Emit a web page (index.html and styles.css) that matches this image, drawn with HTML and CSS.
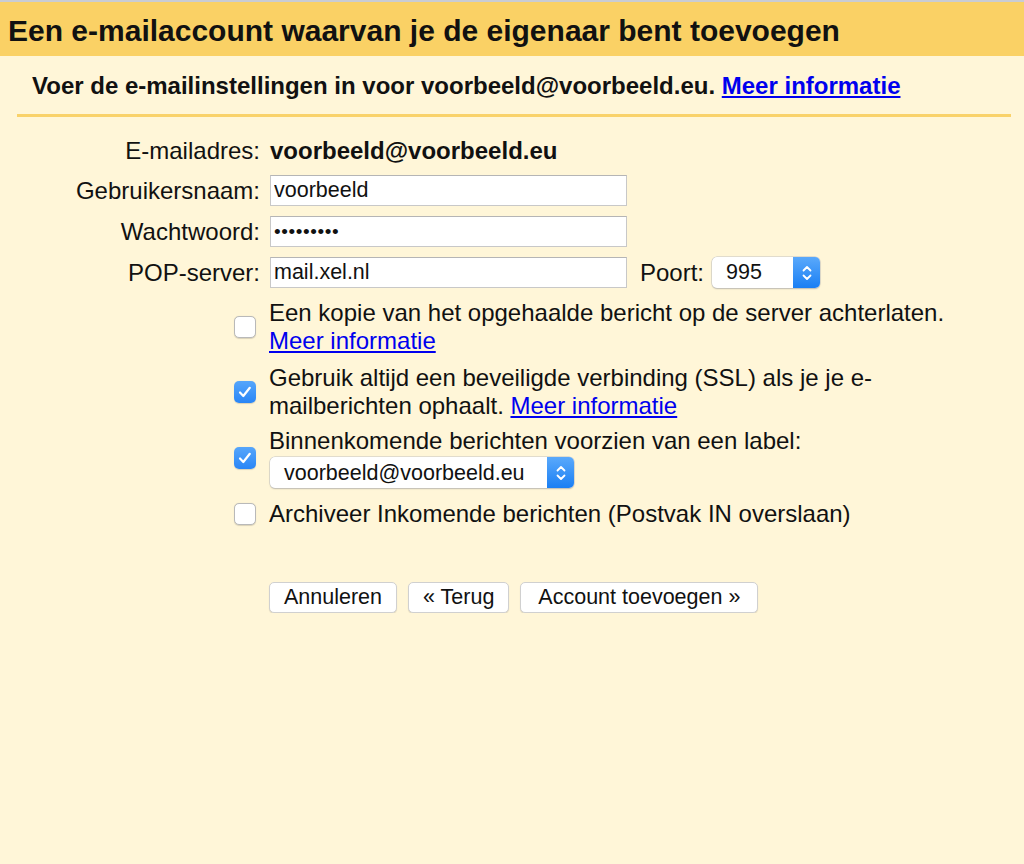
FILE: index.html
```html
<!DOCTYPE html>
<html lang="nl">
<head>
<meta charset="utf-8">
<title>Een e-mailaccount toevoegen</title>
<link rel="stylesheet" href="styles.css">
</head>
<body>
<div class="topline"></div>
<header class="band">
  <h1>Een e-mailaccount waarvan je de eigenaar bent toevoegen</h1>
</header>
<div class="intro">
  Voer de e-mailinstellingen in voor voorbeeld@voorbeeld.eu. <a href="#">Meer informatie</a>
</div>
<div class="rule"></div>

<form class="form">
  <div class="row first">
    <span class="label">E-mailadres:</span>
    <strong class="value">voorbeeld@voorbeeld.eu</strong>
  </div>
  <div class="row">
    <label class="label" for="user">Gebruikersnaam:</label>
    <input class="text" id="user" type="text" value="voorbeeld">
  </div>
  <div class="row">
    <label class="label" for="pw">Wachtwoord:</label>
    <input class="text pw" id="pw" type="text" value="•••••••••">
  </div>
  <div class="row last">
    <label class="label" for="pop">POP-server:</label>
    <input class="text" id="pop" type="text" value="mail.xel.nl">
    <span class="port-label">Poort:</span>
    <div class="select port"><span class="sel-text">995</span><span class="sel-btn"><svg viewBox="0 0 12 20" width="12" height="20"><path d="M2.5 7.5 L6 4 L9.5 7.5 M2.5 12.5 L6 16 L9.5 12.5" fill="none" stroke="#fff" stroke-width="1.8" stroke-linecap="round" stroke-linejoin="round"/></svg></span></div>
  </div>

  <div class="options">
    <div class="opt">
      <span class="cb"></span>
      <div class="opt-text">Een kopie van het opgehaalde bericht op de server achterlaten.<br><a href="#">Meer informatie</a></div>
    </div>
    <div class="opt">
      <span class="cb on"><svg viewBox="0 0 22 22" width="22" height="22"><path d="M6 11.5 L9.3 15 L15.8 6.8" fill="none" stroke="#fff" stroke-width="2.2" stroke-linecap="round" stroke-linejoin="round"/></svg></span>
      <div class="opt-text">Gebruik altijd een beveiligde verbinding (SSL) als je je e-<br>mailberichten ophaalt. <a href="#">Meer informatie</a></div>
    </div>
    <div class="opt opt-label">
      <span class="cb on"><svg viewBox="0 0 22 22" width="22" height="22"><path d="M6 11.5 L9.3 15 L15.8 6.8" fill="none" stroke="#fff" stroke-width="2.2" stroke-linecap="round" stroke-linejoin="round"/></svg></span>
      <div class="opt-text">Binnenkomende berichten voorzien van een label:
        <div class="select labelsel"><span class="sel-text">voorbeeld@voorbeeld.eu</span><span class="sel-btn"><svg viewBox="0 0 12 20" width="12" height="20"><path d="M2.5 7.5 L6 4 L9.5 7.5 M2.5 12.5 L6 16 L9.5 12.5" fill="none" stroke="#fff" stroke-width="1.8" stroke-linecap="round" stroke-linejoin="round"/></svg></span></div>
      </div>
    </div>
    <div class="opt">
      <span class="cb"></span>
      <div class="opt-text">Archiveer Inkomende berichten (Postvak IN overslaan)</div>
    </div>
  </div>

  <div class="buttons">
    <button type="button" class="btn">Annuleren</button>
    <button type="button" class="btn">« Terug</button>
    <button type="button" class="btn wide">Account toevoegen »</button>
  </div>
</form>
</body>
</html>
```

FILE: styles.css
```css
html, body {
  margin: 0;
  padding: 0;
  background: #fff6d8;
  font-family: "Liberation Sans", Arial, Helvetica, sans-serif;
  color: #111;
}

.topline {
  height: 2px;
  background: #c9ccd3;
}

.band {
  background: #fad165;
  height: 54px;
  display: flex;
  align-items: center;
  padding-left: 8px;
}

.band h1 {
  margin: 0;
  padding-top: 3px;
  font-size: 30px;
  font-weight: bold;
  color: #111;
}

.intro {
  padding: 16px 0 0 32px;
  height: 42px;
  font-size: 24px;
  font-weight: bold;
  line-height: 28px;
}

.intro a {
  color: #0000ee;
  text-decoration: underline;
}

.rule {
  height: 3px;
  margin: 0 13px 0 17px;
  background: #f9d26a;
}

.form {
  margin-top: 18px;
  font-size: 24px;
}

.row {
  display: flex;
  align-items: center;
  height: 31px;
  margin-bottom: 10px;
}

.row.first {
  margin-bottom: 9px;
}

.row.last {
  margin-bottom: 0;
}

.label {
  width: 270px;
  text-align: right;
  padding-right: 10px;
  box-sizing: border-box;
  flex: none;
}

.value {
  font-weight: bold;
}

.text {
  box-sizing: border-box;
  width: 357px;
  height: 31px;
  border: 1px solid #c8c8c8;
  border-top-color: #b5b5b5;
  background: #fff;
  font-family: "Liberation Sans", Arial, sans-serif;
  font-size: 21.5px;
  padding: 0 3px;
  color: #111;
  margin: 0;
  outline: none;
}

.pw {
  font-size: 19px;
  letter-spacing: 0.6px;
}

.port-label {
  margin-left: 13px;
  margin-right: 8px;
}

.select {
  display: inline-flex;
  align-items: stretch;
  box-sizing: border-box;
  height: 31px;
  background: #fff;
  border-radius: 5px;
  box-shadow: 0 0 0 0.5px #c4c4c4, 0 1px 1.5px rgba(0,0,0,0.25);
  overflow: hidden;
  font-size: 21.5px;
}

.sel-text {
  flex: 1;
  display: flex;
  align-items: center;
  padding-left: 14px;
}

.sel-btn {
  width: 27px;
  background: linear-gradient(#5aa9fb, #1a7ff4);
  display: flex;
  align-items: center;
  justify-content: center;
}

.port {
  width: 108px;
}

.options {
  margin-top: 11px;
  padding-left: 234px;
  display: flex;
  flex-direction: column;
  gap: 9px;
}

.opt {
  display: flex;
  align-items: center;
  gap: 13px;
}

.opt-label {
  margin-top: -2px;
  margin-bottom: 3px;
}

.opt-text {
  font-size: 24px;
  line-height: 28px;
}

.opt-text a {
  color: #0000ee;
  text-decoration: underline;
}

.cb {
  flex: none;
  box-sizing: border-box;
  width: 22px;
  height: 22px;
  border-radius: 5px;
  background: #fff;
  border: 1px solid #b9b9b9;
  box-shadow: 0 0.5px 1px rgba(0,0,0,0.15);
}

.cb.on {
  border: none;
  background: linear-gradient(#56a6fb, #2a86f6);
}

.cb svg {
  display: block;
}

.labelsel {
  display: flex;
  width: 304px;
  margin-top: 2px;
  margin-left: 1px;
}

.buttons {
  margin-top: 54px;
  padding-left: 269px;
  display: flex;
  gap: 11px;
}

.btn {
  height: 31px;
  padding: 0 14px;
  background: #fff;
  border: 1px solid #d0d0d0;
  border-radius: 5px;
  box-shadow: 0 1px 1px rgba(0,0,0,0.12);
  font-family: "Liberation Sans", Arial, sans-serif;
  font-size: 21.5px;
  color: #111;
}

.btn.wide {
  padding: 0 17px;
}
```
